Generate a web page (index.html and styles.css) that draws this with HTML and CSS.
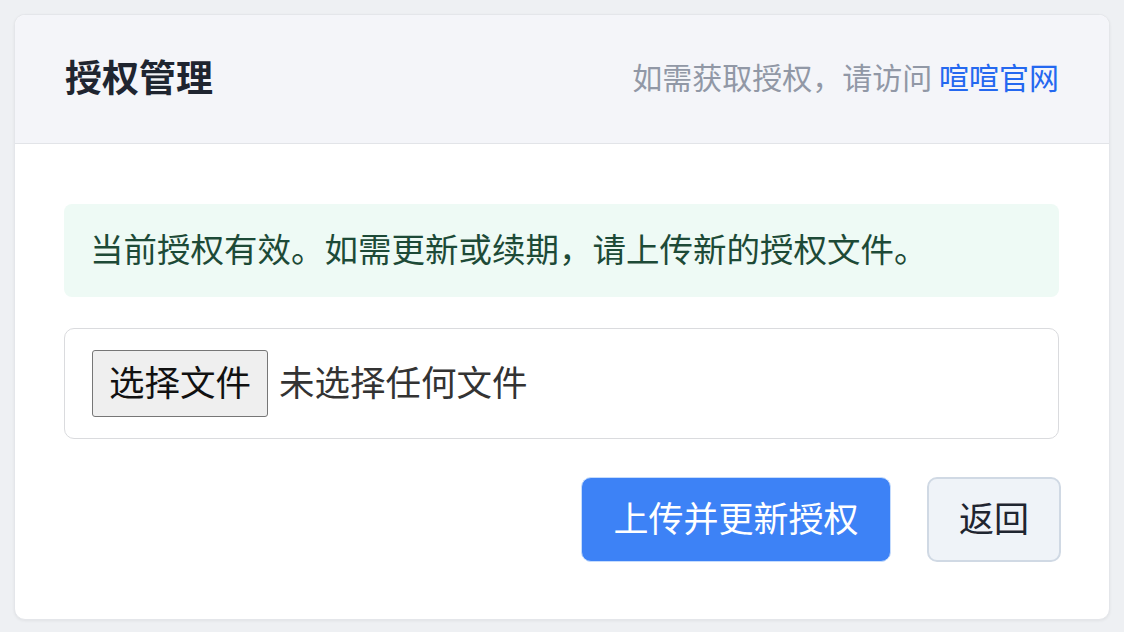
FILE: index.html
```html
<!DOCTYPE html>
<html lang="zh-CN">
<head>
<meta charset="utf-8">
<title>授权管理</title>
<link rel="stylesheet" href="styles.css">
</head>
<body>
<div class="card">
  <div class="card-header">
    <h1 class="title">授权管理</h1>
    <div class="hint">如需获取授权，请访问 <a class="link" href="#">喧喧官网</a></div>
  </div>
  <div class="card-body">
    <div class="alert">当前授权有效。如需更新或续期，请上传新的授权文件。</div>
    <label class="file-box">
      <input class="file-input" type="file">
      <span class="file-btn">选择文件</span>
      <span class="file-name">未选择任何文件</span>
    </label>
    <div class="actions">
      <button class="btn btn-primary" type="button">上传并更新授权</button>
      <button class="btn btn-default" type="button">返回</button>
    </div>
  </div>
</div>
</body>
</html>
```

FILE: styles.css
```css
* { box-sizing: border-box; }
html, body { margin: 0; padding: 0; }
body {
  background: #eef0f3;
  font-family: "Noto Sans CJK SC", "Noto Sans", sans-serif;
  padding: 14px;
}
.card {
  width: 1096px;
  height: 606px;
  background: #ffffff;
  border: 1px solid #e4e6ea;
  border-radius: 11px;
  box-shadow: 0 1px 3px rgba(0, 0, 0, 0.06);
  overflow: hidden;
}
.card-header {
  height: 129px;
  background: #f4f5f9;
  border-bottom: 1px solid #e2e4e8;
  display: flex;
  align-items: center;
  justify-content: space-between;
  padding: 0 50px 6px 50px;
}
.title {
  margin: 0;
  font-size: 37px;
  line-height: 1;
  font-weight: 700;
  color: #1f2530;
}
.hint {
  font-size: 30px;
  line-height: 1;
  color: #9198a6;
}
.link {
  color: #2468f0;
  text-decoration: none;
}
.card-body {
  padding: 60px 50px 0 49px;
}
.alert {
  height: 93px;
  background: #eefaf5;
  border-radius: 8px;
  display: flex;
  align-items: center;
  padding: 0 26px 6px;
  font-size: 33.5px;
  line-height: 1;
  color: #1d4a37;
}
.file-box {
  margin-top: 31px;
  height: 111px;
  border: 1.5px solid #dadbde;
  border-radius: 10px;
  display: flex;
  align-items: center;
  padding: 0 27px;
  cursor: pointer;
}
.file-input { display: none; }
.file-btn {
  height: 67px;
  display: flex;
  align-items: center;
  padding: 0 16px 6px;
  background: #efefef;
  border: 1.5px solid #767676;
  border-radius: 3px;
  font-size: 35.5px;
  line-height: 1;
  color: #111;
}
.file-name {
  margin-left: 11px;
  margin-bottom: 6px;
  font-size: 35.5px;
  line-height: 1;
  color: #333;
}
.actions {
  margin-top: 38px;
  display: flex;
  justify-content: flex-end;
  gap: 36px;
  margin-right: -2px;
}
.btn {
  height: 85px;
  border-radius: 10px;
  font-family: inherit;
  font-size: 35px;
  line-height: 1;
  padding: 0 0 6px;
  cursor: pointer;
}
.btn-primary {
  width: 310px;
  background: #3d82f6;
  border: 1px solid #c5dcfd;
  color: #ffffff;
}
.btn-default {
  width: 134px;
  background: #eff3f8;
  border: 2px solid #d0d9e4;
  color: #1f2530;
}
```
